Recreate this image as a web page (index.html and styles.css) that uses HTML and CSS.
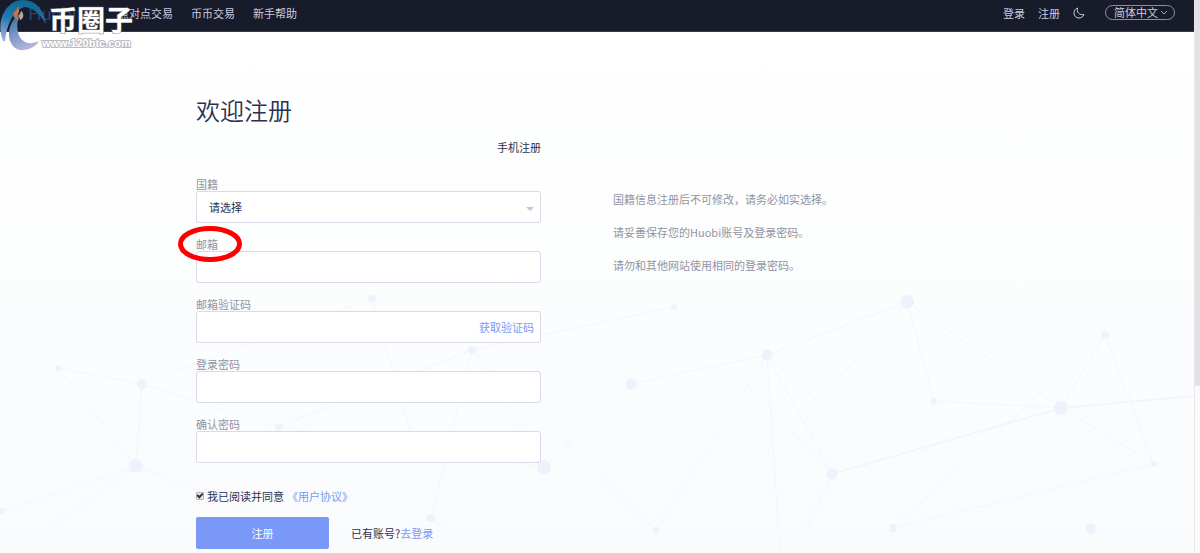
FILE: index.html
```html
<!DOCTYPE html>
<html lang="zh-CN">
<head>
<meta charset="utf-8">
<title>欢迎注册</title>
<link rel="stylesheet" href="styles.css">
</head>
<body>
<div class="page">
  <svg class="network" viewBox="0 0 1194 553" preserveAspectRatio="xMidYMin slice" aria-hidden="true">
    <g class="network-lines">
      <path d="M58 368L142 384L136 466ZM136 466L1 511M136 466L14 553M136 466L250 510M142 384L278 427L472 350M142 384L372 298L410 430M472 350L674 307L832 474M472 350L544 467L279 427M472 350L431 518L350 553M472 350L656 530L767 355L832 474L796 553M544 467L631 384L767 355L907 302L818 402L767 355L780 553M431 518L480 553"/>
      <path d="M907 302L934 401L1061 408L907 302M1061 408L1105 335L893 528L1154 464L1105 335M1061 408L1154 464M1091 529L1160 553"/>
      <path class="network-strong" d="M832 474L1061 408L1195 396"/>
    </g>
    <g class="network-dots">
      <circle cx="58" cy="368" r="3"/><circle cx="142" cy="384" r="5"/><circle cx="136" cy="466" r="7"/><circle cx="1" cy="511" r="3"/>
      <circle cx="372" cy="299" r="4"/><circle cx="472" cy="350" r="4"/><circle cx="279" cy="427" r="4"/><circle cx="544" cy="467" r="7"/><circle cx="431" cy="518" r="4"/>
      <circle cx="674" cy="307" r="3"/><circle cx="631" cy="384" r="5.500"/><circle cx="767" cy="355" r="5.500"/><circle cx="656" cy="530" r="3"/><circle cx="832" cy="474" r="5.500"/>
      <circle cx="907" cy="302" r="7"/><circle cx="934" cy="401" r="3"/><circle cx="1061" cy="408" r="7"/><circle cx="1105" cy="335" r="4"/><circle cx="1154" cy="464" r="3"/><circle cx="893" cy="528" r="4"/><circle cx="1091" cy="529" r="5.500"/>
    </g>
  </svg>

  <header class="topbar">
    <a class="brand" href="#">
      <svg class="flame" viewBox="0 0 10 14" aria-hidden="true"><path d="M4 1C6 4 5 6 4 8C3 10 4 12 5 13C0 12-1 8 2 5C3 4 4 3 4 1Z" fill="#c8753f"/><path d="M7 5C11 9 9 13 6 14C7 12 4 11 5 9C6 8 7 7 7 5Z" fill="#b9a08d"/></svg>
      <span>Huobi</span>
    </a>
    <nav class="menu">
      <a href="#">点对点交易</a>
      <a href="#">币币交易</a>
      <a href="#">新手帮助</a>
    </nav>
    <div class="tools">
      <a href="#">登录</a>
      <a href="#">注册</a>
      <button class="theme" type="button" aria-label="夜间模式">
        <svg viewBox="0 0 12 12" aria-hidden="true"><path d="M4.500 1C3.500 5 6 8.500 11 7.500C10 10 8 11 6 11C3 11 1 9 1 6C1 3.500 2.500 1.500 4.500 1Z"/></svg>
      </button>
      <div class="language">
        <select aria-label="语言"><option>简体中文</option></select>
        <svg viewBox="0 0 8 6" aria-hidden="true"><path d="M1 1L4 4L7 1"/></svg>
      </div>
    </div>
  </header>

  <main class="content">
    <form class="signup">
      <h1>欢迎注册</h1>
      <a class="switch" href="#">手机注册</a>
      <div class="field">
        <label for="country">国籍</label>
        <div class="control">
          <select id="country"><option>请选择</option></select>
          <svg class="caret" viewBox="0 0 8 4" aria-hidden="true"><path d="M0 0H8L4 4Z"/></svg>
        </div>
      </div>
      <div class="field">
        <label for="email">邮箱</label>
        <div class="control"><input id="email" type="email"></div>
        <svg class="marker" viewBox="0 0 64 36" aria-hidden="true"><ellipse cx="32" cy="18" rx="29.500" ry="15.500"/></svg>
      </div>
      <div class="field">
        <label for="code">邮箱验证码</label>
        <div class="control"><input id="code" type="text"><button class="send" type="button">获取验证码</button></div>
      </div>
      <div class="field">
        <label for="password">登录密码</label>
        <div class="control"><input id="password" type="password"></div>
      </div>
      <div class="field">
        <label for="confirm">确认密码</label>
        <div class="control"><input id="confirm" type="password"></div>
      </div>
      <div class="agree">
        <input id="agree" type="checkbox" checked>
        <label for="agree">我已阅读并同意</label>
        <a href="#">《用户协议》</a>
      </div>
      <div class="actions">
        <button class="submit" type="submit">注册</button>
        <p>已有账号?<a href="#">去登录</a></p>
      </div>
    </form>
    <aside class="tips">
      <p>国籍信息注册后不可修改，请务必如实选择。</p>
      <p>请妥善保存您的Huobi账号及登录密码。</p>
      <p>请勿和其他网站使用相同的登录密码。</p>
    </aside>
  </main>

  <svg class="watermark" viewBox="0 0 140 56" role="img" aria-label="币圈子">
    <defs>
      <linearGradient id="swirl" x1="0.600" y1="0" x2="0.300" y2="1"><stop offset="0" stop-color="#0e6790"/><stop offset="0.500" stop-color="#2377ad"/><stop offset="1" stop-color="#98acd9"/></linearGradient>
      <linearGradient id="tail" x1="0.300" y1="0" x2="0.600" y2="1"><stop offset="0" stop-color="#29699b"/><stop offset="0.500" stop-color="#7793c5"/><stop offset="1" stop-color="#b9b5dc"/></linearGradient>
    </defs>
    <path d="M3 41C-3 26 1 8 16 1C32-3 43 6 46 24C39 12 31 7 24 7C13 11 7 24 5 41Z" fill="url(#swirl)"/>
    <path d="M24 11C13 16 8 27 9 37C11 47 17 51 24 50C31 49 36 46 39 41C29 46 20 42 18 32C16 24 18 16 24 11Z" fill="url(#tail)"/>
    <path d="M18 6C20 10 18 12 17 15C17 17 18 19 19 20C13 19 12 14 15 11C17 9 18 8 18 6Z" fill="#c8753f"/>
    <path d="M21 11C25 15 23 19 20 20C20 17 18 16 20 14Z" fill="#c0a48e"/>
    <text class="mark-name" x="49" y="31">币圈子</text>
    <text class="mark-url" x="42" y="47">www.120btc.com</text>
  </svg>
</div>
<div class="scroll-track" aria-hidden="true"><div class="scroll-thumb"></div></div>
</body>
</html>
```
FILE: styles.css
```css
*,
*::before {
  box-sizing: border-box;
}

body {
  margin: 0;
  min-height: 100vh;
  display: flex;
  font: 11px/16px "Noto Sans CJK SC", "Noto Sans", sans-serif;
  color: #2c3150;
}

h1,
p {
  margin: 0;
}

a {
  color: #7a98f7;
  text-decoration: none;
}

input,
select,
button {
  margin: 0;
  padding: 0;
  border: 0;
  background: none;
  font: inherit;
  color: inherit;
}

button {
  cursor: pointer;
}

select {
  appearance: none;
}

.page {
  position: relative;
  z-index: 0;
  flex: 1;
  overflow: hidden;
  background: linear-gradient(#ffffff 32px, #fcfdfd 50%, #fafbfd);
}

.network {
  position: absolute;
  inset: 0;
  z-index: -1;
  width: 100%;
  height: 100%;
}

.network-lines {
  fill: none;
  stroke: #f5f6fb;
}

.network-strong {
  stroke: #f3f4fc;
  stroke-width: 2;
}

.network-dots {
  fill: #eff2fd;
}

.topbar {
  display: flex;
  align-items: center;
  height: 32px;
  padding: 0 19px 6px 14px;
  background: #181b2a;
  border-bottom: 1px solid #343746;
  color: #c9cce2;
}

.topbar a {
  color: inherit;
}

.brand {
  display: flex;
  align-items: center;
  gap: 4px;
  width: 104px;
  font: 18px/24px Lato, sans-serif;
}

.topbar .brand {
  color: #2c4377;
}

.flame {
  width: 10px;
  height: 14px;
}

.menu {
  display: flex;
  gap: 18px;
}

.tools {
  display: flex;
  align-items: center;
  gap: 13px;
  margin-left: auto;
}

.theme {
  display: flex;
  margin-right: 7px;
}

.theme svg {
  width: 12px;
  height: 12px;
  fill: none;
  stroke: #c9cce2;
}

.language {
  position: relative;
}

.language select {
  display: block;
  width: 70px;
  height: 15px;
  padding: 0 8px;
  border: 1px solid #8b8fa8;
  border-radius: 8px;
  line-height: 13px;
}

.language svg {
  position: absolute;
  top: 5px;
  right: 7px;
  width: 8px;
  height: 6px;
  fill: none;
  stroke: #a5a8bd;
  pointer-events: none;
}

.content {
  display: flex;
  gap: 72px;
  max-width: 802px;
  margin: 0 auto;
  padding: 62px 0 3px;
}

.signup {
  display: flex;
  flex-direction: column;
  flex: 0 1 345px;
}

h1 {
  margin-bottom: 13px;
  font-size: 24px;
  line-height: 32px;
  font-weight: 350;
}

.switch {
  align-self: flex-end;
  margin-bottom: 22px;
  color: #2c3150;
}

.field {
  position: relative;
  margin-bottom: 14px;
  color: #9194a3;
}

.field label {
  display: block;
  line-height: 14px;
}

.control {
  position: relative;
  display: flex;
  height: 32px;
  border: 1px solid #d9dae8;
  border-radius: 3px;
  background: #ffffff;
  color: #2c3150;
}

.control input,
.control select {
  flex: 1;
  min-width: 0;
  padding: 0 12px;
}

.caret {
  position: absolute;
  top: 15px;
  right: 6px;
  width: 8px;
  height: 4px;
  fill: #c8c8c8;
  pointer-events: none;
}

.send {
  padding: 0 6px;
  color: #7a98f7;
}

.marker {
  position: absolute;
  top: -11px;
  left: -18px;
  width: 64px;
  height: 36px;
  fill: none;
  stroke: #ff0000;
  stroke-width: 5;
  pointer-events: none;
}

.agree {
  display: flex;
  align-items: center;
  gap: 3px;
  margin: 11px 0 13px;
}

.agree input {
  appearance: none;
  display: grid;
  justify-content: center;
  align-content: start;
  width: 8px;
  height: 8px;
  border: 1px solid #b4b4b4;
  border-radius: 1px;
  background: #e8e8e8;
}

.agree input:checked::before {
  content: "";
  width: 6px;
  height: 4px;
  border: solid #333333;
  border-width: 0 0 2px 2px;
  transform: rotate(-45deg);
}

.actions {
  display: flex;
  align-items: center;
  gap: 22px;
}

.submit {
  width: 133px;
  height: 32px;
  border-radius: 2px;
  background: #7a98f7;
  color: #ffffff;
}

.tips {
  display: flex;
  flex: 1;
  flex-direction: column;
  gap: 17px;
  padding-top: 97px;
  color: #9194a3;
}

.watermark {
  position: absolute;
  top: 0;
  left: 0;
  width: 140px;
  height: 56px;
  pointer-events: none;
}

.mark-name {
  font: bold 28px "Noto Sans CJK SC", sans-serif;
  fill: #ffffff;
  stroke: #70727c;
  stroke-width: 1px;
  paint-order: stroke;
}

.mark-url {
  font: bold 11px "Liberation Sans", sans-serif;
  fill: #ffffff;
  stroke: #b8bac2;
  stroke-width: 2px;
  paint-order: stroke;
}

.scroll-track {
  width: 6px;
  border-left: 1px solid #e8e8ea;
  background: #fafafa;
}

.scroll-thumb {
  height: 386px;
  background: #e2e2e4;
}
```
